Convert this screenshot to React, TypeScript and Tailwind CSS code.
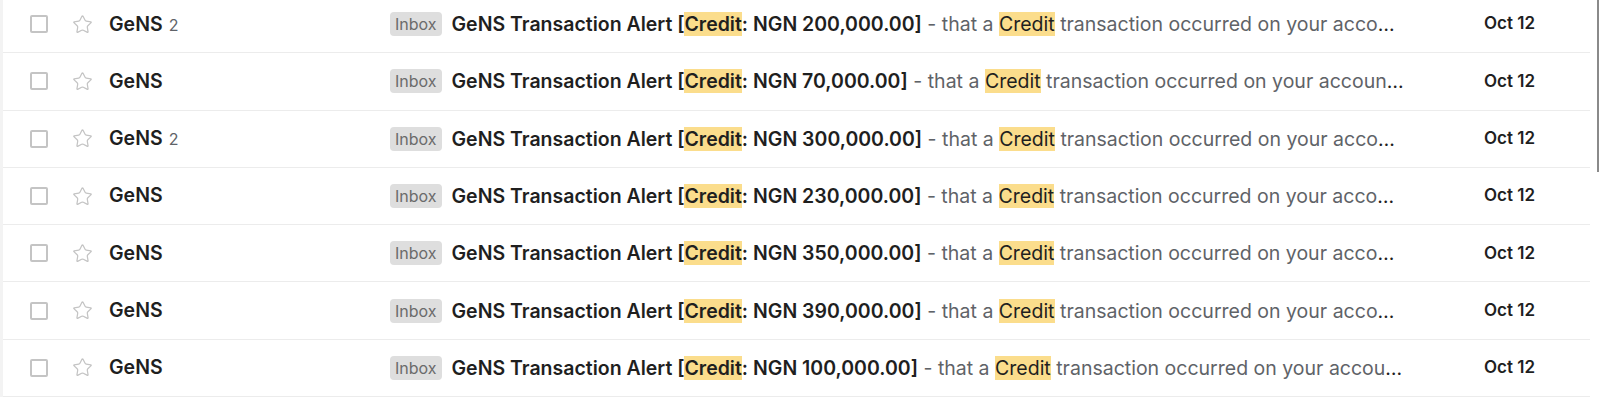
import { Star } from 'lucide-react';

interface Mail {
  count?: number;
  amount: string;
}

const mails: Mail[] = [
  { count: 2, amount: '200,000.00' },
  { amount: '70,000.00' },
  { count: 2, amount: '300,000.00' },
  { amount: '230,000.00' },
  { amount: '350,000.00' },
  { amount: '390,000.00' },
  { amount: '100,000.00' },
];

const snippet = 'transaction occurred on your account with reference number';

function MailRow({ mail }: { mail: Mail }) {
  return (
    <div className="flex h-[57.3px] items-center border-b border-[#ececec] text-[#1f1f1f]">
      {/* checkbox + star */}
      <div className="ml-[27px] h-[18px] w-[18px] rounded-[2px] border-2 border-[#c4c4c4]" />
      <Star className="ml-[24px] h-[21px] w-[21px] text-[#c4c4c4]" strokeWidth={1.4} />

      {/* sender */}
      <div className="ml-[16px] flex w-[281px] shrink-0 items-baseline">
        <span className="text-[19.5px] font-semibold">GeNS</span>
        {mail.count && <span className="ml-[6px] text-[16px] text-[#5f6368]">{mail.count}</span>}
      </div>

      {/* label + subject + snippet */}
      <div className="flex min-w-0 flex-1 items-center">
        <span className="mr-[10px] shrink-0 rounded-[4px] bg-[#dedede] px-[5px] py-[2px] text-[16px] leading-[20px] text-[#6b6b6b]">
          Inbox
        </span>
        <div className="min-w-0 flex-1 truncate text-[19.5px] leading-[28px]">
          <span className="font-semibold">
            GeNS Transaction Alert [<span className="bg-[#fbdd8c]">Credit</span>: NGN {mail.amount}]
          </span>
          <span className="text-[#5f6368]">
            {' '}- that a <span className="bg-[#fbdd8c] text-[#1f1f1f]">Credit</span> {snippet}
          </span>
        </div>
      </div>

      {/* date */}
      <div className="w-[185px] shrink-0 pr-[55px] text-right text-[17px] font-semibold">Oct 12</div>
    </div>
  );
}

export default function App() {
  return (
    <div className="relative h-[401px] w-[1600px] overflow-hidden bg-white" style={{ fontFamily: 'Inter, Roboto, sans-serif' }}>
      <div className="-mt-[4px] mr-[10px] border-l-[3px] border-[#f3f3f3]">
        {mails.map((m, i) => (
          <MailRow key={i} mail={m} />
        ))}
      </div>
      {/* scrollbar */}
      <div className="absolute right-[1px] top-0 h-[172px] w-[2px] bg-[#8a8a8a]" />
    </div>
  );
}
